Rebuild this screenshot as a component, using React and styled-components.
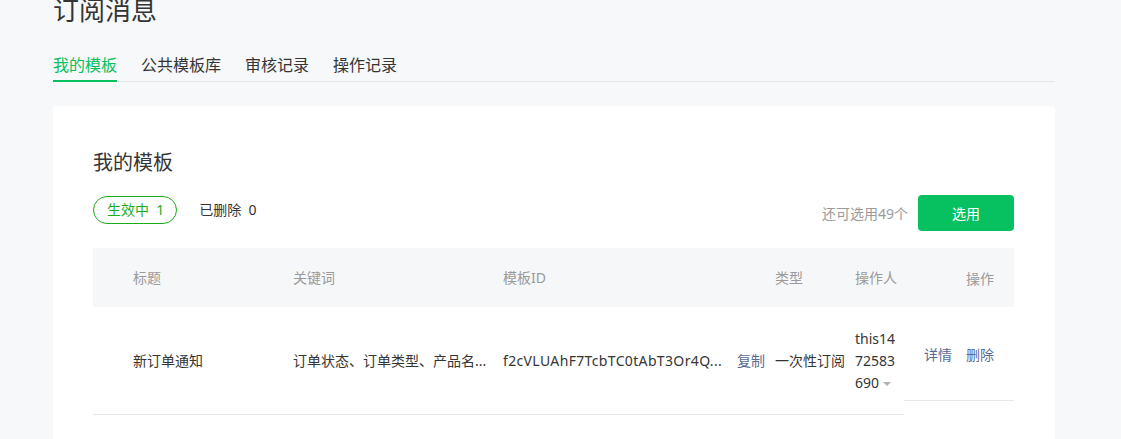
import React from 'react'
import styled, { createGlobalStyle } from 'styled-components'

const GlobalStyle = createGlobalStyle`
  html, body {
    margin: 0;
    padding: 0;
    background: #f7f8fa;
    font-family: "Noto Sans", "Noto Sans CJK SC", sans-serif;
    color: #353535;
  }
`

const Page = styled.div`
  width: 1002px;
  padding-left: 53px;
  overflow: hidden;
  height: 439px;
`

const Title = styled.h1`
  margin: -8px 0 0;
  font-size: 26px;
  line-height: 36px;
  font-weight: 400;
  color: #353535;
`

const Tabs = styled.div`
  display: flex;
  gap: 24px;
  margin-top: 25px;
  border-bottom: 1px solid #e4e6ea;
`

const Tab = styled.div`
  font-size: 16px;
  line-height: 24px;
  padding-bottom: 3px;
  margin-bottom: -1px;
  border-bottom: 2px solid ${({ active }) => (active ? '#07c160' : 'transparent')};
  color: ${({ active }) => (active ? '#07c160' : '#353535')};
`

const Card = styled.div`
  margin-top: 24px;
  background: #fff;
  border-radius: 4px;
  padding: 40px 41px 40px 40px;
`

const Heading = styled.h2`
  margin: 0;
  font-size: 20px;
  line-height: 34px;
  font-weight: 400;
  color: #353535;
`

const ActionRow = styled.div`
  display: flex;
  align-items: flex-start;
  justify-content: space-between;
  margin-top: 15px;
  height: 36px;
`

const Filters = styled.div`
  display: flex;
  align-items: center;
  gap: 22px;
  margin-top: 1px;
`

const Pill = styled.div`
  height: 26px;
  line-height: 26px;
  padding: 0 12px 0 13px;
  border: 1px solid #1aad19;
  border-radius: 14px;
  color: #1aad19;
  font-size: 14px;
`

const FilterText = styled.div`
  font-size: 14px;
  line-height: 28px;
  color: #353535;
`

const Quota = styled.div`
  display: flex;
  align-items: center;
  gap: 10px;
  height: 36px;
  font-size: 14px;
  color: #9a9a9a;
`

const Button = styled.button`
  width: 96px;
  height: 36px;
  border: none;
  border-radius: 4px;
  background: #07c160;
  color: #fff;
  font-family: inherit;
  font-size: 14px;
`

const Table = styled.div`
  display: flex;
  margin-top: 17px;
  font-size: 14px;
`

const Main = styled.div`
  width: 811px;
`

const Fixed = styled.div`
  width: 110px;
`

const HeadRow = styled.div`
  display: flex;
  height: 59px;
  align-items: center;
  background: #f6f7f9;
  color: #9a9a9a;
  justify-content: ${({ right }) => (right ? 'flex-end' : 'flex-start')};
  padding-right: ${({ right }) => (right ? '20px' : '0')};
`

const BodyRow = styled.div`
  display: flex;
  align-items: center;
  height: ${({ h }) => h}px;
  border-bottom: 1px solid #e7e8eb;
  justify-content: ${({ right }) => (right ? 'flex-end' : 'flex-start')};
  padding-right: ${({ right }) => (right ? '20px' : '0')};
  gap: ${({ right }) => (right ? '14px' : '0')};
`

const Cell = styled.div`
  width: ${({ w }) => w}px;
  padding-left: ${({ pl }) => pl || 0}px;
  flex-shrink: 0;
  box-sizing: border-box;
  line-height: 22px;
  white-space: nowrap;
  overflow: hidden;
  display: flex;
  align-items: center;
`

const IdText = styled.span`
  display: inline-block;
  width: 220px;
  letter-spacing: 0.35px;
`

const Operator = styled.div`
  width: 45px;
  line-height: 22px;
  word-break: break-all;
  white-space: normal;
`

const Caret = styled.span`
  display: inline-block;
  margin-left: 4px;
  vertical-align: middle;
  border-left: 4px solid transparent;
  border-right: 4px solid transparent;
  border-top: 4px solid #b2b2b2;
`

const Link = styled.span`
  color: #576b95;
  margin-left: ${({ ml }) => ml || 0}px;
`

const columns = [
  { key: 'title', label: '标题', w: 200, pl: 40 },
  { key: 'kw', label: '关键词', w: 210 },
  { key: 'id', label: '模板ID', w: 272 },
  { key: 'type', label: '类型', w: 80 },
  { key: 'op', label: '操作人', w: 49 },
]

export default function App() {
  return (
    <>
      <GlobalStyle />
      <Page>
        <Title>订阅消息</Title>
        <Tabs>
          <Tab active>我的模板</Tab>
          <Tab>公共模板库</Tab>
          <Tab>审核记录</Tab>
          <Tab>操作记录</Tab>
        </Tabs>
        <Card>
          <Heading>我的模板</Heading>
          <ActionRow>
            <Filters>
              <Pill>生效中&nbsp;&nbsp;1</Pill>
              <FilterText>已删除&nbsp;&nbsp;0</FilterText>
            </Filters>
            <Quota>
              还可选用49个
              <Button>选用</Button>
            </Quota>
          </ActionRow>
          <Table>
            <Main>
              <HeadRow>
                {columns.map((c) => (
                  <Cell key={c.key} w={c.w} pl={c.pl}>{c.label}</Cell>
                ))}
              </HeadRow>
              <BodyRow h={107}>
                <Cell w={200} pl={40}>新订单通知</Cell>
                <Cell w={210}>订单状态、订单类型、产品名...</Cell>
                <Cell w={272}>
                  <IdText>f2cVLUAhF7TcbTC0tAbT3Or4Q...</IdText>
                  <Link ml={14}>复制</Link>
                </Cell>
                <Cell w={80}>一次性订阅</Cell>
                <Cell w={49}>
                  <Operator>
                    this1472583690<Caret />
                  </Operator>
                </Cell>
              </BodyRow>
            </Main>
            <Fixed>
              <HeadRow right>操作</HeadRow>
              <BodyRow h={93} right>
                <Link>详情</Link>
                <Link>删除</Link>
              </BodyRow>
            </Fixed>
          </Table>
        </Card>
      </Page>
    </>
  )
}
